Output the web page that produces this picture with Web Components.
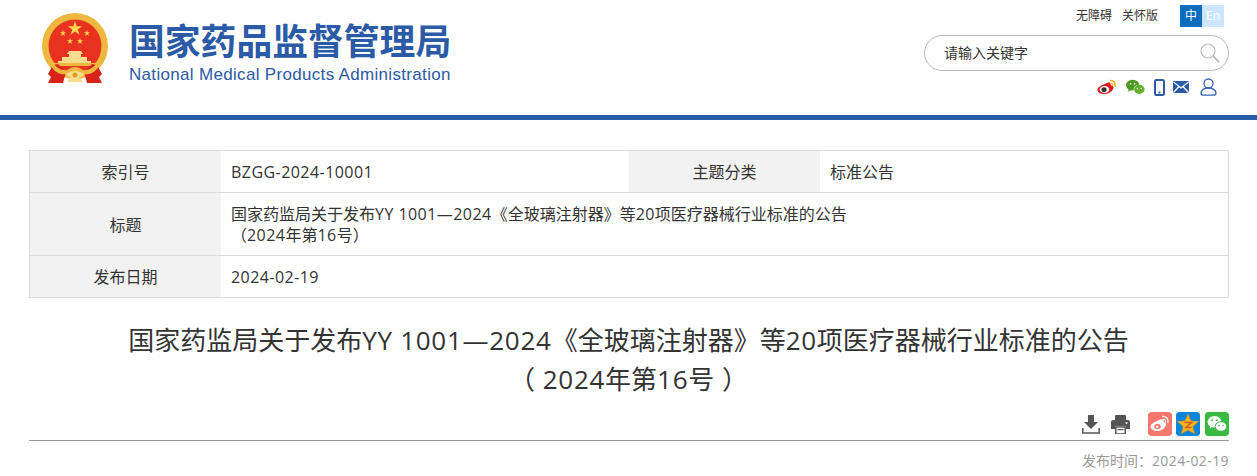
<!DOCTYPE html>
<html lang="zh">
<head>
<meta charset="utf-8">
<title>国家药品监督管理局</title>
<style>
  html, body { margin: 0; padding: 0; background: #fff; }
  body { font-family: "Open Sans", "Noto Sans CJK SC", sans-serif; color: #333; overflow: hidden; }
</style>
</head>
<body>
<site-header></site-header>
<info-table>
  <info-row label="索引号" second-label="主题分类" second-value="标准公告"><span class="lat">BZGG-2024-10001</span></info-row>
  <info-row label="标题" tall>国家药监局关于发布<span class="lat">YY 1001—2024</span>《全玻璃注射器》等<span class="lat">20</span>项医疗器械行业标准的公告<br>（<span class="lat">2024</span>年第<span class="lat">16</span>号）</info-row>
  <info-row label="发布日期"><span class="lat">2024-02-19</span></info-row>
</info-table>
<article-title>国家药监局关于发布<span class="lat">YY 1001—2024</span>《全玻璃注射器》等<span class="lat">20</span>项医疗器械行业标准的公告<br><span class="op">（</span><span class="lat">2024</span>年第<span class="lat">16</span>号<span class="cl">）</span></article-title>
<share-bar date="2024-02-19"></share-bar>

<script>
const FONT = '"Open Sans", "Noto Sans CJK SC", sans-serif';

class GovEmblem extends HTMLElement {
  constructor() {
    super();
    this.attachShadow({ mode: 'open' });
    this.shadowRoot.innerHTML = `
      <style>:host { display: block; width: 66px; height: 70px; } svg { display: block; }</style>
      <svg width="66" height="70" viewBox="0 0 66 70">
        <circle cx="33" cy="33" r="33" fill="#efb73e"/>
        <circle cx="33" cy="33" r="26.500" fill="#e8321f"/>
        <polygon points="33,8 34.700,13.200 40.200,13.200 35.700,16.400 37.400,21.700 33,18.400 28.600,21.700 30.300,16.400 25.800,13.200 31.300,13.200" fill="#f8d64e"/>
        <polygon points="21,17 21.800,19.200 24.100,19.200 22.200,20.600 22.900,22.900 21,21.500 19.100,22.900 19.800,20.600 17.900,19.200 20.200,19.200" fill="#f8d64e"/>
        <polygon points="45,17 45.800,19.200 48.100,19.200 46.200,20.600 46.900,22.900 45,21.500 43.100,22.900 43.800,20.600 41.900,19.200 44.200,19.200" fill="#f8d64e"/>
        <polygon points="28,25 28.800,27.200 31.100,27.200 29.200,28.600 29.900,30.900 28,29.500 26.100,30.900 26.800,28.600 24.900,27.200 27.200,27.200" fill="#f8d64e"/>
        <polygon points="38,25 38.800,27.200 41.100,27.200 39.200,28.600 39.900,30.900 38,29.500 36.100,30.900 36.800,28.600 34.900,27.200 37.200,27.200" fill="#f8d64e"/>
        <path d="M25 41l2-3h12l2 3h-2v3h6v4h4v4H16v-4h4v-4h7v-3z" fill="#f9dc8c"/>
        <rect x="12" y="50" width="42" height="3" fill="#efb73e"/>
        <path d="M11 52l5-1 8 8-3 11H6l3-6-3-3z" fill="#d8231b"/>
        <path d="M55 52l-5-1-8 8 3 11h15l-3-6 3-3z" fill="#d8231b"/>
        <path d="M11 50c4 5 9 8 14 7 3-2 5-3 8-3s5 1 8 3c5 1 10-2 14-7l2 3c-4 7-10 9-16 8-3 1-5 1-8 1s-5 0-8-1c-6 1-12-1-16-8z" fill="#efb73e"/>
        <path d="M24 61c3-2 6-3 9-3s6 1 9 3c-1 2-3 3-5 3l4 5H25l4-5c-2 0-4-1-5-3z" fill="#f9dc8c"/>
        <circle cx="33" cy="62" r="2.500" fill="#dc9a22"/>
      </svg>`;
  }
}

class SiteLogo extends HTMLElement {
  constructor() {
    super();
    this.attachShadow({ mode: 'open' });
    this.shadowRoot.innerHTML = `
      <style>
        :host { display: flex; align-items: flex-start; gap: 21px; color: #2b5aa6; }
        gov-emblem { margin-top: 1px; }
        .text { display: flex; flex-direction: column; padding-top: 2px; }
        .cn { font: 700 35.800px/50px "Noto Sans CJK SC", sans-serif; white-space: nowrap; }
        .en { font: 400 17px/20px "Liberation Sans", sans-serif; white-space: nowrap; letter-spacing: .32px; margin-top: 1px; }
      </style>
      <gov-emblem></gov-emblem>
      <div class="text">
        <div class="cn">国家药品监督管理局</div>
        <div class="en">National Medical Products Administration</div>
      </div>`;
  }
}

class SearchBox extends HTMLElement {
  constructor() {
    super();
    this.attachShadow({ mode: 'open' });
    this.shadowRoot.innerHTML = `
      <style>
        :host { display: flex; align-items: center; justify-content: space-between; box-sizing: border-box;
          width: 305px; height: 36px; border: 1px solid #b8b8b8; border-radius: 18px; padding: 0 8px 0 19px;
          font: 14px/18px ${FONT}; color: #333; }
        svg { display: block; }
      </style>
      <span>请输入关键字</span>
      <svg width="20" height="20" viewBox="0 0 20 20" fill="none" stroke="#bdbdbd">
        <circle cx="8" cy="8" r="7" stroke-width="1.200"/>
        <path d="M13 13l6 6" stroke-width="1.800"/>
      </svg>`;
  }
}

class SocialIcons extends HTMLElement {
  constructor() {
    super();
    this.attachShadow({ mode: 'open' });
    this.shadowRoot.innerHTML = `
      <style>
        :host { display: flex; align-items: center; height: 18px; }
        svg { display: block; }
      </style>
      <svg width="20" height="16" viewBox="0 0 20 16" style="margin-right:9px">
        <path d="M8 5c3-2 5-2 5.500 0 .2 1 0 1.400 1 1.600 2 .6 2.500 2 1.500 3.600C14.500 13 11 15 7 15c-3.500 0-6.500-1.500-6.500-4.500C.5 8.500 4 6 8 5z" fill="#e0141c"/>
        <ellipse cx="7.500" cy="10.500" rx="4.800" ry="3.500" fill="#fff"/>
        <ellipse cx="7" cy="10.700" rx="2.600" ry="2.400" fill="#333"/>
        <path d="M13 1.500c3.500-.5 6 2.500 5 6" fill="none" stroke="#f5a623" stroke-width="1.500"/>
        <path d="M13.500 4.300c1.500-.2 2.500 1 2.100 2.500" fill="none" stroke="#f5a623" stroke-width="1.200"/>
      </svg>
      <svg width="19" height="16" viewBox="0 0 20 16" style="margin-right:9px">
        <ellipse cx="7" cy="6" rx="7" ry="5.700" fill="#4a9a1e"/>
        <path d="M3 9.500l-1 3.500 4-2z" fill="#4a9a1e"/>
        <ellipse cx="14" cy="10.500" rx="6" ry="5" fill="#fff"/>
        <ellipse cx="14" cy="10.500" rx="5.500" ry="4.800" fill="#62b32a"/>
        <circle cx="4.800" cy="4.500" r=".9" fill="#fff"/><circle cx="9" cy="4.500" r=".9" fill="#fff"/>
        <circle cx="12" cy="9.500" r=".8" fill="#fff"/><circle cx="16" cy="9.500" r=".8" fill="#fff"/>
      </svg>
      <svg width="11" height="17" viewBox="0 0 11 17" style="margin-right:8px">
        <rect x="1" y="1" width="9" height="15" rx="1.500" fill="none" stroke="#2b5aa6" stroke-width="2"/>
        <rect x="4.500" y="12.500" width="2" height="2" fill="#2b5aa6"/>
      </svg>
      <svg width="16" height="12" viewBox="0 0 16 12" style="margin-right:11px">
        <rect width="16" height="12" rx="1" fill="#2b5aa6"/>
        <path d="M.5 1L8 7l7.500-6M.5 11.500L6 5.500M15.500 11.500L10 5.500" fill="none" stroke="#fff" stroke-width="1.200"/>
      </svg>
      <svg width="17" height="18" viewBox="0 0 17 18" fill="none" stroke="#3a62b0" stroke-width="1.300">
        <circle cx="8.500" cy="5.500" r="4.500"/>
        <path d="M8.500 10c-4 0-7.500 2-7.500 5 0 1.500 1 2.200 2.500 2.200h10c1.500 0 2.500-.7 2.500-2.200 0-3-3.500-5-7.500-5z"/>
      </svg>`;
  }
}

class SiteHeader extends HTMLElement {
  constructor() {
    super();
    this.attachShadow({ mode: 'open' });
    this.shadowRoot.innerHTML = `
      <style>
        :host { display: block; box-sizing: border-box; height: 120px; border-bottom: 5px solid #2b5aa6; }
        .wrap { display: flex; justify-content: space-between; height: 115px; box-sizing: border-box;
          padding: 12px 28px 0 42px; }
        .side { display: flex; flex-direction: column; align-items: flex-end; margin-top: -7px; }
        .top { display: flex; align-items: center; height: 22px; margin-right: 5px; font: 12px/22px ${FONT}; color: #333; }
        .top a { margin-left: 10px; color: inherit; text-decoration: none; }
        .lang { display: flex; margin-left: 22px; }
        .lang span { width: 22px; height: 22px; text-align: center; font: 12px/22px ${FONT}; }
        .zh { background: #0b6dbd; color: #fff; }
        .en { background: #cce6ff; color: #fff; }
        search-box { margin-top: 8px; }
        social-icons { margin-top: 7px; margin-right: 12px; }
      </style>
      <div class="wrap">
        <site-logo></site-logo>
        <div class="side">
          <div class="top">
            <a>无障碍</a><a>关怀版</a>
            <div class="lang"><span class="zh">中</span><span class="en">En</span></div>
          </div>
          <search-box></search-box>
          <social-icons></social-icons>
        </div>
      </div>`;
  }
}

class InfoTable extends HTMLElement {
  constructor() {
    super();
    this.attachShadow({ mode: 'open' });
    this.shadowRoot.innerHTML = `
      <style>
        :host { display: block; box-sizing: border-box; width: 1200px; margin: 30px 0 0 29px;
          border: 1px solid #dcdcdc; font: 16px/21px ${FONT}; color: #333; }
      </style>
      <slot></slot>`;
  }
}

class InfoRow extends HTMLElement {
  constructor() {
    super();
    this.attachShadow({ mode: 'open' });
    const second = this.hasAttribute('second-label')
      ? `<div class="label">${this.getAttribute('second-label')}</div><div class="value">${this.getAttribute('second-value')}</div>`
      : '';
    this.shadowRoot.innerHTML = `
      <style>
        :host { display: flex; min-height: 41px; border-top: 1px solid #dcdcdc; }
        :host(:first-child) { border-top: 0; }
        :host([tall]) { min-height: 62px; }
        .label { flex: 0 0 191px; display: flex; align-items: center; justify-content: center; background: #f2f2f2; padding-top: 2px; box-sizing: border-box; }
        .value { flex: 1; display: flex; align-items: center; padding: 2px 10px 0; min-width: 0; }
        .first { flex: 0 0 388px; }
        ::slotted(.lat) { letter-spacing: .028em; }
      </style>
      <div class="label">${this.getAttribute('label')}</div>
      <div class="value ${second ? 'first' : ''}"><div><slot></slot></div></div>
      ${second}`;
  }
}

class ArticleTitle extends HTMLElement {
  constructor() {
    super();
    this.attachShadow({ mode: 'open' });
    this.shadowRoot.innerHTML = `
      <style>
        :host { display: block; margin: 23px 0 0; text-align: center; font: 400 26px/39px ${FONT}; color: #333; }
        ::slotted(.lat) { letter-spacing: .028em; }
        ::slotted(.op) { margin-right: .3em; }
        ::slotted(.cl) { margin-left: .3em; }
      </style>
      <slot></slot>`;
  }
}

class ShareBar extends HTMLElement {
  constructor() {
    super();
    this.attachShadow({ mode: 'open' });
    this.shadowRoot.innerHTML = `
      <style>
        :host { display: block; box-sizing: border-box; width: 1200px; margin: 10px 0 0 29px; }
        .icons { display: flex; justify-content: flex-end; align-items: center; height: 30px; border-bottom: 1px solid #999; padding-bottom: 1px; }
        svg { display: block; }
        .tool { margin-right: 11px; }
        .print { margin-right: 18px; }
        .sq { margin-right: 4px; border-radius: 3px; }
        .sq.wide { margin-right: 5px; }
        .sq:last-child { margin-right: 0; }
        .date { text-align: right; font: 14px/20px ${FONT}; color: #999; margin-top: 9px; }
        .date b { font: inherit; font-family: "Noto Sans CJK TC", sans-serif; }
        .date i { font-style: normal; letter-spacing: .4px; }
      </style>
      <div class="icons">
        <svg class="tool" width="18" height="19" viewBox="0 0 18 19">
          <path d="M6 0h6v7h4l-7 7-7-7h4z" fill="#555"/>
          <path d="M.8 13v5h16.400v-5" fill="none" stroke="#555" stroke-width="1.500"/>
        </svg>
        <svg class="print" width="19" height="19" viewBox="0 0 19 19">
          <rect x="4" y="0" width="11" height="6" rx="1" fill="#555"/>
          <path d="M2 5h15a2 2 0 0 1 2 2v7h-4v-3H4v3H0V7a2 2 0 0 1 2-2z" fill="#555"/>
          <rect x="4.800" y="12" width="9.400" height="7" fill="none" stroke="#555" stroke-width="1.500"/>
          <rect x="6.500" y="14" width="6" height="1.200" fill="#555"/>
          <circle cx="15.500" cy="8" r="1" fill="#fff"/>
        </svg>
        <svg class="sq" width="24" height="24" viewBox="0 0 24 24">
          <rect width="24" height="24" rx="3" fill="#f2766b"/>
          <path d="M9 9c3-2 6-2.500 6.500-.5.200.800 0 1.200.800 1.400 2 .5 2.400 2 1.500 3.500C16.500 16.500 13 19 9 19c-3.500 0-6.500-1.600-6.500-4.500C2.500 12.500 5.500 10 9 9z" fill="#fff"/>
          <ellipse cx="9.500" cy="14.500" rx="3.200" ry="2.800" fill="#f2766b"/>
          <circle cx="9.200" cy="14.700" r="1.300" fill="#fff"/>
          <path d="M14 4.500c4-.7 7 2.500 5.800 6.500M15 7.500c1.700-.3 3 1 2.500 2.800" fill="none" stroke="#fff" stroke-width="1.300"/>
        </svg>
        <svg class="sq wide" width="24" height="24" viewBox="0 0 24 24">
          <rect width="24" height="24" rx="3" fill="#0a84d8"/>
          <path d="M12 2l3 7 7.500.6-5.700 4.900 1.800 7.300L12 18l-6.600 3.800 1.800-7.300L1.500 9.600 9 9z" fill="#fdb515" stroke="#e8960c" stroke-width=".5"/>
          <path d="M8.500 10.500h7l-5.500 5h5.500" fill="none" stroke="#d2552a" stroke-width="1.500"/>
        </svg>
        <svg class="sq" width="24" height="24" viewBox="0 0 24 24">
          <rect width="24" height="24" rx="3" fill="#38b93f"/>
          <ellipse cx="9.500" cy="9.800" rx="7" ry="5.800" fill="#fff"/>
          <path d="M5.500 13.500l-.8 3 3.300-2z" fill="#fff"/>
          <ellipse cx="16" cy="14.500" rx="5.800" ry="4.800" fill="#fff" stroke="#38b93f" stroke-width="1"/>
          <circle cx="7.200" cy="8.200" r=".9" fill="#38b93f"/><circle cx="11.800" cy="8.200" r=".9" fill="#38b93f"/>
          <circle cx="14" cy="13.500" r=".8" fill="#38b93f"/><circle cx="18" cy="13.500" r=".8" fill="#38b93f"/>
        </svg>
      </div>
      <div class="date">发布时间<b>：</b><i>${this.getAttribute('date')}</i></div>`;
  }
}

customElements.define('gov-emblem', GovEmblem);
customElements.define('site-logo', SiteLogo);
customElements.define('search-box', SearchBox);
customElements.define('social-icons', SocialIcons);
customElements.define('site-header', SiteHeader);
customElements.define('info-table', InfoTable);
customElements.define('info-row', InfoRow);
customElements.define('article-title', ArticleTitle);
customElements.define('share-bar', ShareBar);
</script>
</body>
</html>
